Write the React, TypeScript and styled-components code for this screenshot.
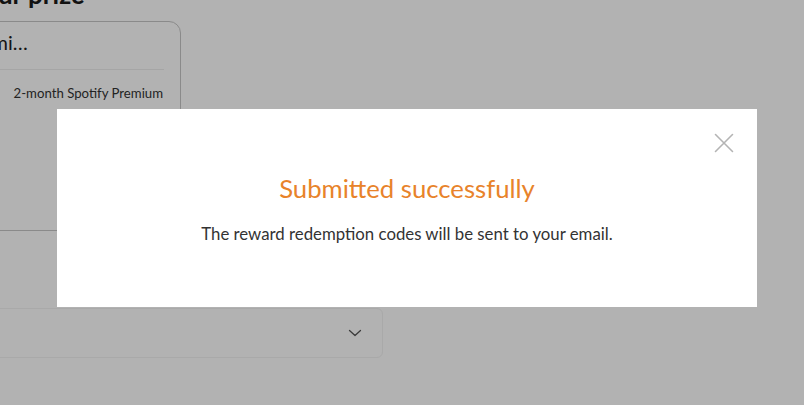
import React from 'react';
import styled, { createGlobalStyle } from 'styled-components';

const GlobalStyle = createGlobalStyle`
  html, body {
    margin: 0;
    padding: 0;
    background: #ffffff;
    overflow: hidden;
  }
  body {
    font-family: "Lato", "Open Sans", sans-serif;
    width: 804px;
    height: 405px;
  }
`;

const App = () => {
  return (
    <>
      <GlobalStyle />
      <Page>
        <Heading>Choose your prize</Heading>
        <PrizeCard>
          <CardTitle>Spotify Premium Individual</CardTitle>
          <Divider />
          <DetailRow>
            <DetailValue>2-month Spotify Premium</DetailValue>
          </DetailRow>
        </PrizeCard>
        <SelectBox>
          <SelectText />
          <Chevron viewBox="0 0 16 16">
            <path d="M2.5 5.5 L8 10.5 L13.5 5.5" fill="none" stroke="#555" strokeWidth="1.3" strokeLinecap="round" strokeLinejoin="round" />
          </Chevron>
        </SelectBox>
      </Page>

      <Overlay>
        <Modal>
          <CloseButton aria-label="close">
            <svg width="20" height="20" viewBox="0 0 20 20">
              <path d="M1.5 1.5 L18.5 18.5 M18.5 1.5 L1.5 18.5" stroke="#b4b4b4" strokeWidth="1.6" strokeLinecap="round" />
            </svg>
          </CloseButton>
          <ModalTitle>Submitted successfully</ModalTitle>
          <ModalText>The reward redemption codes will be sent to your email.</ModalText>
        </Modal>
      </Overlay>
    </>
  );
};

export default App;

const Page = styled.div`
  margin-left: -140px;
  margin-top: -22px;
  width: 523px;
  display: flex;
  flex-direction: column;
`;

const Heading = styled.h2`
  margin: 0 0 11px 0;
  padding-left: 17px;
  font-size: 26px;
  line-height: 32px;
  font-weight: 700;
  color: #1a1a1a;
`;

const PrizeCard = styled.div`
  width: 321px;
  height: 210px;
  box-sizing: border-box;
  border: 1.5px solid #c6c6c6;
  border-radius: 12px;
  display: flex;
  flex-direction: column;
`;

const CardTitle = styled.div`
  margin: 7px 0 0 34px;
  width: 140px;
  font-size: 20px;
  line-height: 26px;
  color: #1e1e1e;
  white-space: nowrap;
  overflow: hidden;
  text-overflow: ellipsis;
`;

const Divider = styled.div`
  margin: 14px 16px 0 0;
  height: 1px;
  background: #ececec;
`;

const DetailRow = styled.div`
  display: flex;
  justify-content: flex-end;
  padding: 14px 17px 0 0;
`;

const DetailValue = styled.span`
  font-size: 13.2px;
  line-height: 18px;
  color: #333333;
`;

const SelectBox = styled.div`
  margin-top: 77px;
  width: 523px;
  height: 50px;
  box-sizing: border-box;
  border: 1px solid #f2f2f2;
  border-radius: 6px;
  display: flex;
  align-items: center;
  padding: 0 18px;
`;

const SelectText = styled.span`
  flex: 1;
`;

const Chevron = styled.svg`
  width: 16px;
  height: 16px;
  margin-right: 1px;
`;

const Overlay = styled.div`
  position: fixed;
  inset: 0;
  background: rgba(0, 0, 0, 0.3);
  display: flex;
  align-items: center;
  justify-content: center;
  padding: 10px 0 0 10px;
`;

const Modal = styled.div`
  position: relative;
  width: 700px;
  height: 198px;
  background: #ffffff;
  display: flex;
  flex-direction: column;
  align-items: center;
  padding-top: 63px;
  box-sizing: border-box;
`;

const CloseButton = styled.button`
  position: absolute;
  top: 24px;
  right: 23px;
  border: none;
  background: none;
  padding: 0;
  display: flex;
  cursor: pointer;
`;

const ModalTitle = styled.h3`
  margin: 0;
  font-size: 25.7px;
  line-height: 32px;
  font-weight: 400;
  color: #e8832a;
`;

const ModalText = styled.p`
  margin: 19px 0 0 0;
  font-size: 16.8px;
  line-height: 22px;
  font-weight: 400;
  color: #333333;
`;
